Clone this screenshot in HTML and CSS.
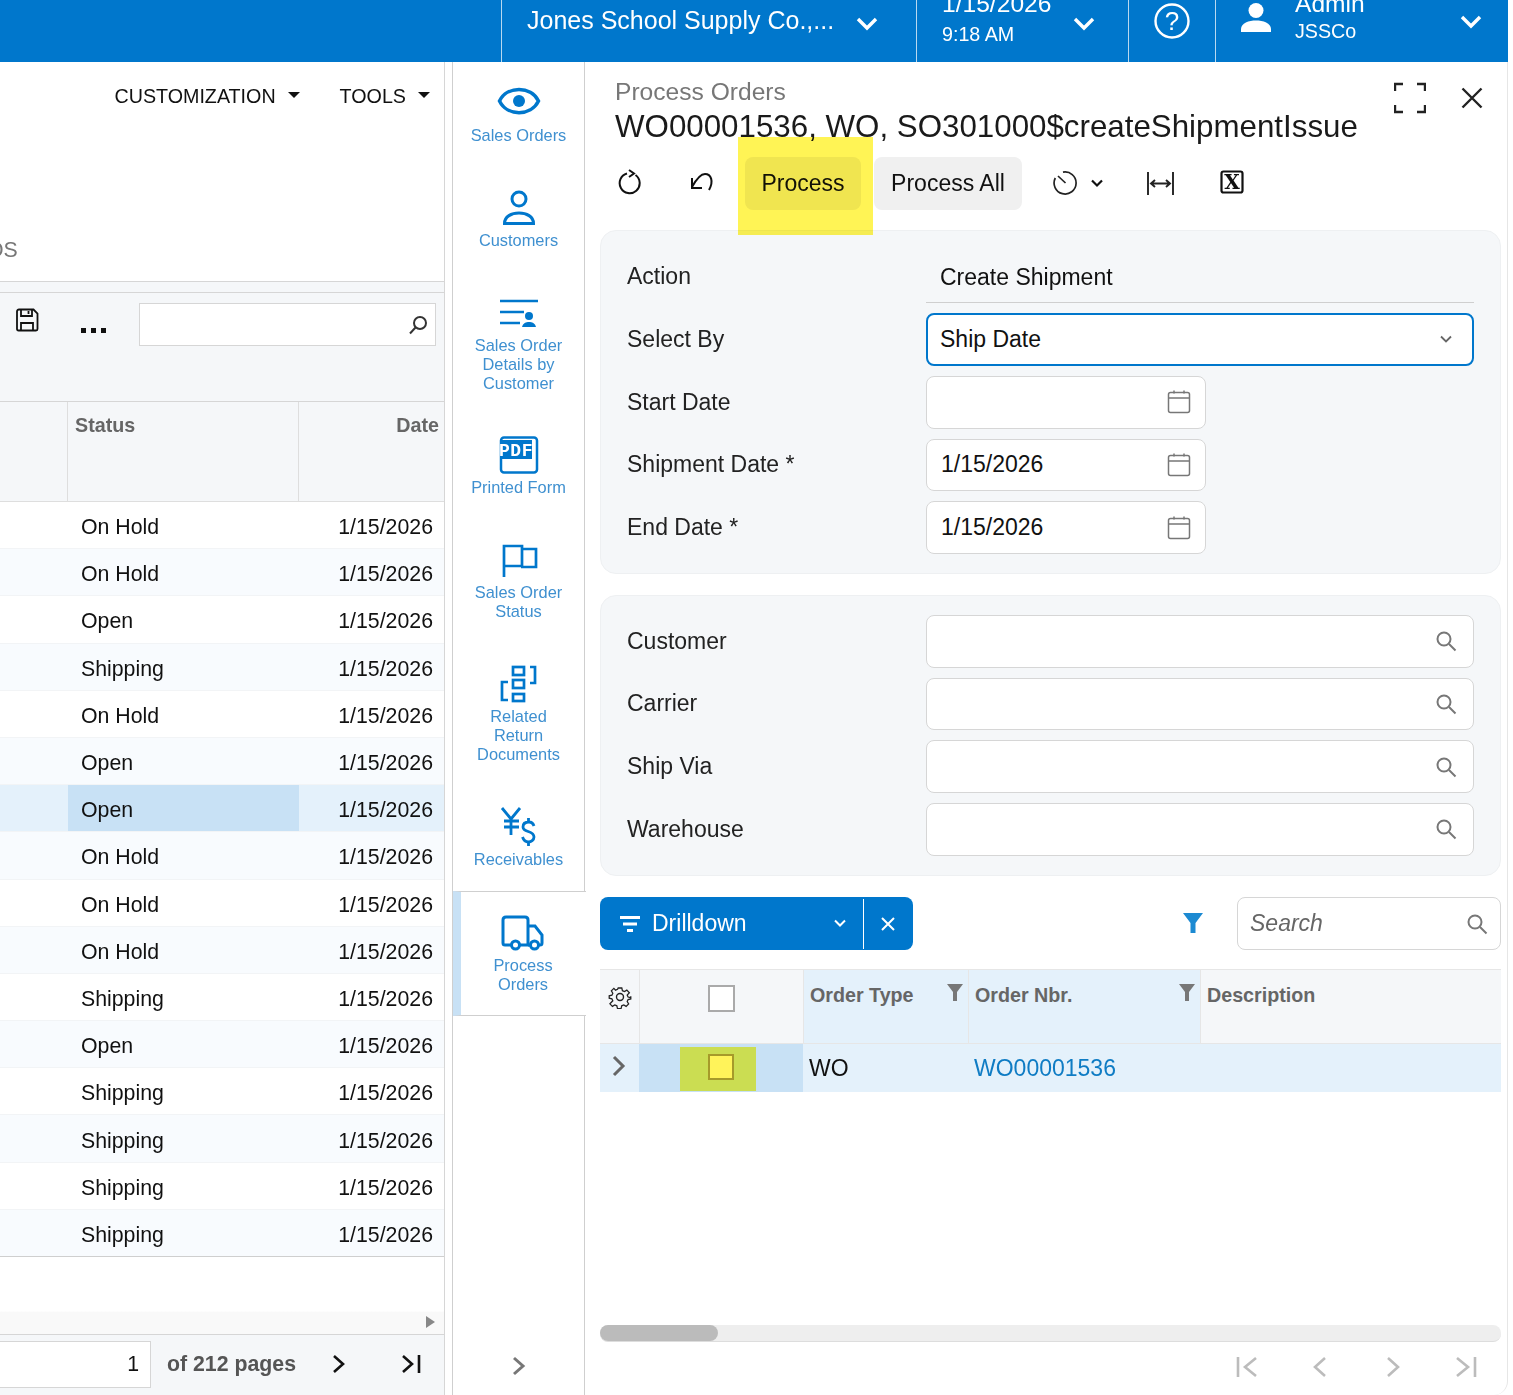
FILE: index.html
```html
<!DOCTYPE html>
<html lang="en">
<head>
<meta charset="utf-8">
<title>Process Orders</title>
<link rel="stylesheet" href="styles.css">
</head>
<body>
<header class="topbar">
  <div class="top-cell company"><span class="company-name">Jones School Supply Co.,...</span>
    <svg class="chev" width="22" height="14" viewBox="0 0 22 14"><path d="M2 2l9 9 9-9" /></svg></div>
  <div class="top-cell when"><div class="two-line"><div class="big">1/15/2026</div><div class="small">9:18 AM</div></div>
    <svg class="chev" width="22" height="14" viewBox="0 0 22 14"><path d="M2 2l9 9 9-9" /></svg></div>
  <div class="top-cell help"><svg width="36" height="36" viewBox="0 0 36 36"><circle cx="18" cy="18" r="16.500" fill="none" stroke="#fff" stroke-width="2.400"/><text x="18" y="27" text-anchor="middle" class="qmark">?</text></svg></div>
  <div class="top-cell user"><svg class="user-ico" width="30" height="30" viewBox="0 0 30 30"><ellipse cx="15" cy="7.500" rx="7.500" ry="7.500" fill="#fff"/><path d="M0 29v-3c0-6 8-8.500 15-8.500s15 2.500 15 8.500v3z" fill="#fff"/></svg>
    <div class="two-line user-text"><div class="big">Admin</div><div class="small">JSSCo</div></div>
    <svg class="chev" width="22" height="14" viewBox="0 0 22 14"><path d="M2 2l9 9 9-9" /></svg></div>
</header>
<main class="workspace">
  <section class="left">
    <div class="menu">
      <span class="menu-item">CUSTOMIZATION<i class="caret"></i></span>
      <span class="menu-item">TOOLS<i class="caret"></i></span>
    </div>
    <div class="left-title">OS</div>
    <div class="strip"></div>
    <div class="grid-tools">
      <svg class="save" width="24" height="24" viewBox="0 0 24 24" fill="none" stroke="#111" stroke-width="1.800"><path d="M2 3.500C2 2 3 1.500 4 1.500h14.500l4 4V21c0 1-.7 1.500-1.500 1.500H3.500C2.500 22.500 2 22 2 21z"/><path d="M6 1.500v6.500h11V1.500M6 22.500V15h12v7.500"/><path d="M13.500 3v3"/></svg>
      <span class="dots"><i></i><i></i><i></i></span>
      <div class="quick"><svg width="22" height="22" viewBox="0 0 22 22" fill="none" stroke="#333" stroke-width="2"><circle cx="13" cy="9" r="6"/><path d="M8.500 13.500L3 19.500"/></svg></div>
    </div>
    <div class="lg-head"><div class="lg-c0"></div><div class="lg-status">Status</div><div class="lg-date">Date</div></div>
    <div class="lg-rows">
      <div class="lg-row"><span class="s">On Hold</span><span class="d">1/15/2026</span></div>
      <div class="lg-row alt"><span class="s">On Hold</span><span class="d">1/15/2026</span></div>
      <div class="lg-row"><span class="s">Open</span><span class="d">1/15/2026</span></div>
      <div class="lg-row alt"><span class="s">Shipping</span><span class="d">1/15/2026</span></div>
      <div class="lg-row"><span class="s">On Hold</span><span class="d">1/15/2026</span></div>
      <div class="lg-row alt"><span class="s">Open</span><span class="d">1/15/2026</span></div>
      <div class="lg-row sel"><span class="s">Open</span><span class="d">1/15/2026</span></div>
      <div class="lg-row alt"><span class="s">On Hold</span><span class="d">1/15/2026</span></div>
      <div class="lg-row"><span class="s">On Hold</span><span class="d">1/15/2026</span></div>
      <div class="lg-row alt"><span class="s">On Hold</span><span class="d">1/15/2026</span></div>
      <div class="lg-row"><span class="s">Shipping</span><span class="d">1/15/2026</span></div>
      <div class="lg-row alt"><span class="s">Open</span><span class="d">1/15/2026</span></div>
      <div class="lg-row"><span class="s">Shipping</span><span class="d">1/15/2026</span></div>
      <div class="lg-row alt"><span class="s">Shipping</span><span class="d">1/15/2026</span></div>
      <div class="lg-row"><span class="s">Shipping</span><span class="d">1/15/2026</span></div>
      <div class="lg-row alt"><span class="s">Shipping</span><span class="d">1/15/2026</span></div>
    </div>
    <div class="lg-empty"><i class="tiny-arrow"></i></div>
    <div class="lg-pager">
      <div class="page-input">1</div>
      <span class="pages">of 212 pages</span>
      <svg class="pg-next" width="16" height="20" viewBox="0 0 16 20" fill="none" stroke="#111" stroke-width="2.600"><path d="M3 2l9 8-9 8"/></svg>
      <svg class="pg-last" width="22" height="20" viewBox="0 0 22 20" fill="none" stroke="#111" stroke-width="2.600"><path d="M2 2l9 8-9 8M18 1v18"/></svg>
    </div>
  </section>

  <nav class="side">
    <a class="side-item"><svg class="ic" width="44" height="40" viewBox="0 0 44 40" fill="none" stroke="#0077cc"><path d="M2.500 20C10 4.500 34 4.500 41.500 20 34 35.500 10 35.500 2.500 20z" stroke-width="3.500"/><circle cx="22" cy="20" r="6" fill="#0077cc" stroke="none"/></svg><span>Sales Orders</span></a>
    <a class="side-item"><svg class="ic" width="44" height="40" viewBox="0 0 44 40" fill="none" stroke="#0077cc" stroke-width="3"><circle cx="22" cy="11" r="7"/><path d="M7.500 35.500c0-7 7-10.500 14.500-10.500s14.500 3.500 14.500 10.500z"/></svg><span>Customers</span></a>
    <a class="side-item"><svg class="ic" width="44" height="40" viewBox="0 0 44 40" fill="none" stroke="#0077cc" stroke-width="2.600"><path d="M3 8h38M3 19h24M3 30h20"/><circle cx="32" cy="23" r="4" fill="#0077cc" stroke="none"/><path d="M25 34c1-4 4-5 7-5s6 1 7 5z" fill="#0077cc" stroke="none"/></svg><span>Sales Order<br>Details by<br>Customer</span></a>
    <a class="side-item pdf-item"><svg class="ic" width="44" height="40" viewBox="0 0 44 40" fill="none"><rect x="4" y="2.500" width="36" height="35" rx="3" stroke="#0077cc" stroke-width="2.500"/><rect x="3" y="5" width="32" height="19" fill="#0077cc"/><text x="19" y="21" text-anchor="middle" class="pdf">PDF</text></svg><span>Printed Form</span></a>
    <a class="side-item"><svg class="ic" width="44" height="40" viewBox="0 0 44 40" fill="none" stroke="#0077cc" stroke-width="2.700"><path d="M7 37V6h18v20H7"/><path d="M25 9h14v18H24"/></svg><span>Sales Order<br>Status</span></a>
    <a class="side-item"><svg class="ic" width="44" height="40" viewBox="0 0 44 40" fill="none" stroke="#0077cc" stroke-width="2.700"><rect x="16" y="3" width="11" height="8"/><rect x="16" y="16" width="11" height="8"/><rect x="16" y="30" width="11" height="7"/><path d="M33 3h5v16h-5M11 18H5v18h6"/></svg><span>Related<br>Return<br>Documents</span></a>
    <a class="side-item"><svg class="ic" width="44" height="40" viewBox="0 0 44 40" fill="none" stroke="#0077cc" stroke-width="2.800"><path d="M5 1l9 11 9-11M14 12v16M7 14h15M7 20h15"/><path d="M37 19c-1-3-3-4-5-4-3 0-6 1-6 5 0 6 11 3 11 10 0 3-3 5-5.500 5-3 0-5-2-6-5M31.500 11v4M31.500 35v4"/></svg><span>Receivables</span></a>
    <a class="side-item active"><svg class="ic" width="44" height="40" viewBox="0 0 44 40" fill="none" stroke="#0077cc" stroke-width="3"><path d="M12 32H5c-1.500 0-2-1-2-2V7c0-2 1-3 3-3h19c2 0 3 1 3 3v25H19"/><path d="M28 13h7l7 9v8c0 1-.5 2-2 2h-2M31 32h-3"/><circle cx="15.500" cy="32" r="4"/><circle cx="34.500" cy="32" r="4"/></svg><span>Process<br>Orders</span></a>
    <div class="side-fill"><svg class="side-chev" width="16" height="22" viewBox="0 0 16 22" fill="none" stroke="#777" stroke-width="3"><path d="M3 3l9 8-9 8"/></svg></div>
  </nav>

  <section class="panel">
    <div class="hl-process"></div>
    <div class="panel-head">
      <div class="titles">
        <div class="t-small">Process Orders</div>
        <div class="t-big">WO00001536, WO, SO301000$createShipmentIssue</div>
      </div>
      <svg class="full" width="32" height="32" viewBox="0 0 32 32" fill="none" stroke="#222" stroke-width="2.400"><path d="M1 9V2h8M23 2h8v7M31 23v7h-8M9 30H1v-7"/></svg>
      <svg class="close" width="22" height="22" viewBox="0 0 22 22" fill="none" stroke="#222" stroke-width="2.400"><path d="M1.500 1.500l19 19M20.500 1.500l-19 19"/></svg>
    </div>
    <div class="tools">
      <svg class="t-refresh" width="24" height="26" viewBox="0 0 24 26" fill="none" stroke="#111" stroke-width="2"><path d="M9 4.500a10 10 0 1 0 8.500 1.500"/><path d="M11 1l5 3.500-5 3.500"/></svg>
      <svg class="t-undo" width="26" height="20" viewBox="0 0 26 20" fill="none" stroke="#111" stroke-width="2"><path d="M3 15C8 6 12 2 16 2c6 0 9 7 4 16"/><path d="M3 6v10h10"/></svg>
      <button class="btn btn-process">Process</button>
      <button class="btn btn-all">Process All</button>
      <svg class="t-clock" width="26" height="26" viewBox="0 0 26 26" fill="none" stroke="#222" stroke-width="1.700"><path d="M11 2.200A11 11 0 1 1 3.300 8"/><path d="M6 6l7.500 7"/></svg>
      <svg class="t-down" width="14" height="9" viewBox="0 0 14 9" fill="none" stroke="#111" stroke-width="2.200"><path d="M2 1.500l5 5 5-5"/></svg>
      <svg class="t-fit" width="28" height="26" viewBox="0 0 28 26" fill="none" stroke="#222" stroke-width="1.900"><path d="M2 2v23M27 2v23M5 13.500h19M9 10l-4 3.500 4 3.500M20 10l4 3.500-4 3.500"/></svg>
      <svg class="t-xl" width="24" height="26" viewBox="0 0 24 26"><rect x="1.500" y="2.500" width="21" height="21" rx="2" fill="none" stroke="#111" stroke-width="2.200"/><text x="12" y="20" text-anchor="middle" class="xl">X</text></svg>
    </div>

    <div class="form-card">
      <div class="label">Action</div><div class="value-line">Create Shipment</div>
      <div class="label">Select By</div>
      <div class="field focus">Ship Date<svg class="fi" width="14" height="9" viewBox="0 0 14 9" fill="none" stroke="#666" stroke-width="1.800"><path d="M2 1.500l5 5 5-5"/></svg></div>
      <div class="label">Start Date</div>
      <div class="field short"><svg class="fi" width="24" height="24" viewBox="0 0 24 24" fill="none" stroke="#777" stroke-width="1.500"><rect x="1.500" y="2.500" width="21" height="20" rx="2"/><path d="M1.500 8h21M7 .5v3M17 .5v3"/></svg></div>
      <div class="label">Shipment Date *</div>
      <div class="field short">1/15/2026<svg class="fi" width="24" height="24" viewBox="0 0 24 24" fill="none" stroke="#777" stroke-width="1.500"><rect x="1.500" y="2.500" width="21" height="20" rx="2"/><path d="M1.500 8h21M7 .5v3M17 .5v3"/></svg></div>
      <div class="label">End Date *</div>
      <div class="field short">1/15/2026<svg class="fi" width="24" height="24" viewBox="0 0 24 24" fill="none" stroke="#777" stroke-width="1.500"><rect x="1.500" y="2.500" width="21" height="20" rx="2"/><path d="M1.500 8h21M7 .5v3M17 .5v3"/></svg></div>
    </div>

    <div class="form-card second">
      <div class="label">Customer</div>
      <div class="field"><svg class="fi mag" width="22" height="22" viewBox="0 0 22 22" fill="none" stroke="#777" stroke-width="2"><circle cx="9" cy="9" r="6.500"/><path d="M14 14l6.500 6.500"/></svg></div>
      <div class="label">Carrier</div>
      <div class="field"><svg class="fi mag" width="22" height="22" viewBox="0 0 22 22" fill="none" stroke="#777" stroke-width="2"><circle cx="9" cy="9" r="6.500"/><path d="M14 14l6.500 6.500"/></svg></div>
      <div class="label">Ship Via</div>
      <div class="field"><svg class="fi mag" width="22" height="22" viewBox="0 0 22 22" fill="none" stroke="#777" stroke-width="2"><circle cx="9" cy="9" r="6.500"/><path d="M14 14l6.500 6.500"/></svg></div>
      <div class="label">Warehouse</div>
      <div class="field"><svg class="fi mag" width="22" height="22" viewBox="0 0 22 22" fill="none" stroke="#777" stroke-width="2"><circle cx="9" cy="9" r="6.500"/><path d="M14 14l6.500 6.500"/></svg></div>
    </div>

    <div class="filter-bar">
      <div class="drill">
        <svg class="dr-ico" width="20" height="16" viewBox="0 0 20 16" fill="#fff"><rect x="0" y="0" width="20" height="3"/><rect x="3" y="6.500" width="14" height="3"/><rect x="7" y="13" width="6" height="3"/></svg>
        <span class="dr-text">Drilldown</span>
        <svg class="dr-chev" width="14" height="9" viewBox="0 0 14 9" fill="none" stroke="#fff" stroke-width="2"><path d="M2 1.500l5 5 5-5"/></svg>
        <span class="dr-x"><svg width="14" height="14" viewBox="0 0 14 14" fill="none" stroke="#fff" stroke-width="2"><path d="M1 1l12 12M13 1L1 13"/></svg></span>
      </div>
      <svg class="funnel" width="20" height="20" viewBox="0 0 20 20" fill="#1c8ad2"><path d="M0 0h20L12.500 10v10h-5V10z"/></svg>
      <div class="search"><span>Search</span><svg width="22" height="22" viewBox="0 0 22 22" fill="none" stroke="#777" stroke-width="2"><circle cx="9" cy="9" r="6.500"/><path d="M14 14l6.500 6.500"/></svg></div>
    </div>

    <div class="dg">
      <div class="dg-h c-gear"><svg width="24" height="24" viewBox="0 0 24 24" fill="none" stroke="#222" stroke-width="1.400"><circle cx="12" cy="12" r="3.500"/><path d="M10 2h4l.7 3 2.300 1 2.600-1.600 2.800 2.800L20 9.800l1 2.200 3 .7v-1.400 2.800l-3 .7-1 2.200 1.600 2.600-2.800 2.800-2.600-1.600-2.300 1-.7 3h-4l-.7-3-2.300-1-2.600 1.600-2.800-2.800L4 16.200l-1-2.200-3-.7v-2.600l3-.7 1-2.200-1.600-2.600 2.800-2.800L7 4.400l2.300-1z" transform="translate(1.200 1.200) scale(.9)"/></svg></div>
      <div class="dg-h c-check"><i class="box"></i></div>
      <div class="dg-h c-blue">Order Type<svg class="hf" width="16" height="17" viewBox="0 0 16 17" fill="#777"><path d="M0 0h16L10 8v9H6V8z"/></svg></div>
      <div class="dg-h c-blue">Order Nbr.<svg class="hf" width="16" height="17" viewBox="0 0 16 17" fill="#777"><path d="M0 0h16L10 8v9H6V8z"/></svg></div>
      <div class="dg-h">Description</div>
      <div class="dg-c c-arrow"><svg width="16" height="22" viewBox="0 0 16 22" fill="none" stroke="#666" stroke-width="3"><path d="M3 2l9 9-9 9"/></svg></div>
      <div class="dg-c c-sel"><span class="yel"><i class="box y"></i></span></div>
      <div class="dg-c">WO</div>
      <div class="dg-c link">WO00001536</div>
      <div class="dg-c"></div>
    </div>

    <div class="grow"></div>
    <div class="hscroll"><div class="thumb"></div></div>
    <div class="pager">
      <svg width="22" height="22" viewBox="0 0 22 22"><path d="M2 1v20M20 2L9 11l11 9"/></svg>
      <svg width="22" height="22" viewBox="0 0 22 22"><path d="M16 2L6 11l10 9"/></svg>
      <svg width="22" height="22" viewBox="0 0 22 22"><path d="M6 2l10 9-10 9"/></svg>
      <svg width="22" height="22" viewBox="0 0 22 22"><path d="M2 2l11 9-11 9M20 1v20"/></svg>
    </div>
  </section>
</main>
</body>
</html>
```

FILE: styles.css
```css
* { box-sizing: border-box; }
html, body { margin: 0; padding: 0; }
body {
  width: 1513px;
  height: 1395px;
  overflow: hidden;
  background: #fff;
  font-family: "Liberation Sans", Arial, sans-serif;
  color: #111;
}

/* top bar */
.topbar {
  height: 62px;
  width: 1508px;
  background: #0077cc;
  color: #fff;
  display: flex;
  padding-left: 501px;
  overflow: hidden;
}
.top-cell {
  display: flex;
  align-items: center;
  border-left: 1px solid #b9d9f0;
  height: 62px;
  position: relative;
}
.company { width: 415px; padding-left: 25px; font-size: 25px; padding-bottom: 20px; }
.company-name { width: 329px; margin-top: -2px; }
.company .chev { margin-top: 5px; }
.when { width: 212px; padding-left: 25px; }
.when .chev { margin-top: -14px; }
.help { width: 87px; justify-content: center; padding-bottom: 20px; }
.user { width: 293px; padding-left: 25px; }
.user .chev { margin-top: -18px; }
.two-line { width: 131px; margin-top: -26px; }
.big { font-size: 24.600px; line-height: 28px; }
.small { font-size: 19.700px; line-height: 23px; margin-top: 5px; }
.user-text .small { margin-top: 2px; margin-bottom: 3px; }
.chev { fill: none; stroke: #fff; stroke-width: 3.400; flex: none; }
.qmark { fill: #fff; font-size: 26px; font-family: "Liberation Sans", sans-serif; }
.user-ico { margin-top: -26px; flex: none; }
.user-text { margin-left: 24px; width: 165px; }

/* main */
.workspace { display: flex; height: 1333px; width: 1508px; }

/* left */
.left {
  width: 445px;
  margin-right: 7px;
  display: flex;
  flex-direction: column;
  border-right: 1px solid #d6d6d6;
  flex: none;
}
.menu {
  height: 62px;
  display: flex;
  justify-content: flex-end;
  align-items: center;
  gap: 40px;
  padding-right: 14px;
  font-size: 19.700px;
  padding-top: 6px;
  flex: none;
}
.menu-item { display: flex; align-items: center; }
.caret {
  display: block;
  width: 0;
  height: 0;
  margin-left: 12px;
  margin-top: -2px;
  border-left: 6px solid transparent;
  border-right: 6px solid transparent;
  border-top: 6px solid #111;
}
.left-title {
  height: 158px;
  padding-top: 112px;
  margin-left: -13px;
  font-size: 21.300px;
  line-height: 28px;
  color: #777;
  border-bottom: 1px solid #d6d6d6;
  flex: none;
}
.strip { height: 11px; background: #f5f7f9; border-bottom: 1px solid #d6d6d6; flex: none; }
.grid-tools {
  height: 109px;
  background: #f5f7f9;
  display: flex;
  align-items: flex-start;
  border-bottom: 1px solid #d6d6d6;
  padding-top: 10px;
  flex: none;
}
.save { margin: 5px 0 0 15px; flex: none; }
.dots { display: flex; gap: 5px; margin: 25px 0 0 42px; flex: none; }
.dots i { width: 5px; height: 5px; background: #111; display: block; }
.quick {
  width: 297px;
  height: 43px;
  margin-left: 33px;
  background: #fff;
  border: 1px solid #d6d6d6;
  display: flex;
  justify-content: flex-end;
  align-items: center;
  padding-right: 6px;
  flex: none;
}
.lg-head {
  height: 100px;
  background: #f5f7f9;
  display: grid;
  grid-template-columns: 67px 231px 1fr;
  border-bottom: 1px solid #dedede;
  font-weight: 700;
  font-size: 19.700px;
  color: #666;
  flex: none;
}
.lg-status, .lg-date { padding-top: 11px; border-left: 1px solid #dedede; line-height: 24px; }
.lg-status { padding-left: 7px; }
.lg-date { text-align: right; padding-right: 5px; }
.lg-rows {
  height: 755px;
  display: grid;
  grid-auto-rows: 47.200px;
  flex: none;
  border-bottom: 1px solid #cfcfcf;
  overflow: hidden;
}
.lg-row {
  display: grid;
  grid-template-columns: 68px 231px 1fr;
  align-items: center;
  font-size: 21.300px;
  border-bottom: 1px solid #f2f4f6;
}
.lg-row.alt { background: #f8fbfe; }
.lg-row.sel { background: #e4f1fb; }
.s { grid-column: 2; padding: 5px 0 0 13px; align-self: stretch; display: flex; align-items: center; }
.sel .s { background: #c8e1f5; }
.d { text-align: right; padding: 5px 11px 0 0; }
.lg-empty {
  height: 78px;
  background: linear-gradient(#fff 70%, #f9f9f9 72%);
  border-bottom: 1px solid #d6d6d6;
  position: relative;
  flex: none;
}
.tiny-arrow {
  position: absolute;
  right: 9px;
  bottom: 6px;
  width: 0;
  height: 0;
  border-top: 6px solid transparent;
  border-bottom: 6px solid transparent;
  border-left: 9px solid #888;
}
.lg-pager {
  flex: 1;
  background: #f5f7f9;
  display: flex;
  align-items: flex-start;
  padding-top: 6px;
}
.page-input {
  width: 151px;
  height: 47px;
  background: #fff;
  border: 1px solid #d6d6d6;
  border-left: 0;
  text-align: right;
  padding-right: 11px;
  font-size: 21.300px;
  line-height: 45px;
  flex: none;
}
.pages { margin-left: 16px; font-weight: 700; font-size: 21.300px; line-height: 46px; color: #555; width: 129px; flex: none; white-space: nowrap; }
.pg-next { margin: 13px 0 0 35px; flex: none; }
.pg-last { margin: 13px 0 0 54px; flex: none; }

/* side nav */
.side {
  width: 133px;
  display: flex;
  flex-direction: column;
  border-left: 1px solid #cfcfcf;
  flex: none;
}
.side-item {
  display: flex;
  flex-direction: column;
  align-items: center;
  padding: 21.500px 0;
  border-right: 1px solid #cfcfcf;
  font-size: 16.400px;
  line-height: 19px;
  color: #3f90d0;
  text-align: center;
  flex: none;
}
.side-item:first-child { padding-top: 19px; }
.side-item:first-child .ic { margin-bottom: 5px; }
.side-item.pdf-item { padding-top: 20.500px; }
.ic { display: block; margin-bottom: 3px; flex: none; }
.pdf { fill: #fff; font-family: "Liberation Mono", monospace; font-weight: 700; font-size: 18px; letter-spacing: .5px; }
.side-item.active {
  border-right: 0;
  border-top: 1px solid #cfcfcf;
  border-bottom: 1px solid #cfcfcf;
  border-left: 8px solid #c8e1f5;
  padding: 21px 1px 21px 0;
  margin-right: -1px;
}
.side-item.active .ic { margin-left: -3px; }
.side-fill {
  flex: 1;
  border-right: 1px solid #cfcfcf;
  display: flex;
  justify-content: center;
  align-items: flex-end;
  padding-bottom: 18px;
}

/* panel */
.panel {
  flex: 1;
  min-width: 0;
  display: flex;
  flex-direction: column;
  padding: 0 6px 0 15px;
  position: relative;
  border-right: 1px solid #e6e6e6;
  border-bottom-right-radius: 14px;
}
.hl-process {
  position: absolute;
  left: 153px;
  top: 75px;
  width: 135px;
  height: 98px;
  background: rgba(255, 240, 20, .72);
  mix-blend-mode: multiply;
}
.panel-head { display: flex; padding: 16px 0 0 15px; height: 95px; flex: none; }
.titles { flex: 1; min-width: 0; }
.t-small { font-size: 24.600px; line-height: 28px; color: #777; }
.t-big { font-size: 31.300px; line-height: 38px; margin-top: 2px; color: #1a1a1a; white-space: nowrap; }
.full { margin: 4px 35px 0 0; flex: none; }
.close { margin: 9px 18px 0 0; flex: none; }
.tools { display: flex; align-items: center; height: 53px; flex: none; margin-bottom: 20px; }
.btn {
  height: 53px;
  border: 0;
  border-radius: 8px;
  font: 23px "Liberation Sans", Arial, sans-serif;
  color: #111;
  background: #f0f0f0;
  padding: 0;
  flex: none;
}
.t-refresh { margin: -3px 0 0 18px; flex: none; }
.t-undo { margin: -3px 0 0 47px; flex: none; }
.btn-process { width: 116px; margin-left: 30px; }
.btn-all { width: 148px; margin-left: 13px; }
.t-clock { margin: -2px 0 0 30px; flex: none; }
.t-down { margin-left: 12px; flex: none; }
.t-fit { margin: -2px 0 0 42px; flex: none; }
.t-xl { margin: -3px 0 0 46px; flex: none; }

.form-card {
  background: #f5f7f9;
  border: 1px solid #eef0f2;
  border-radius: 16px;
  display: grid;
  grid-template-columns: 299px 1fr;
  grid-auto-rows: 52.700px;
  row-gap: 10px;
  padding: 19.500px 26px 19.500px 26px;
  margin-bottom: 21px;
  font-size: 23px;
  align-items: stretch;
  flex: none;
}
.form-card.second { margin-bottom: 21px; padding: 18.500px 26px 19.700px 26px; }
.label { display: flex; align-items: center; color: #222; }
.value-line { border-bottom: 1px solid #cfcfcf; padding: 2px 0 0 14px; display: flex; align-items: center; height: 52px; }
.field {
  background: #fff;
  border: 1px solid #d6d6d6;
  border-radius: 8px;
  display: flex;
  align-items: center;
  padding: 0 14px;
  position: relative;
}
.field.short { width: 280px; }
.field.focus { border: 2px solid #0077cc; padding-left: 12px; }
.fi { margin-left: auto; flex: none; }
.mag { margin-right: 2px; }
.focus .fi { margin-right: 5px; }

.filter-bar { display: flex; align-items: center; height: 53px; flex: none; margin-bottom: 19px; }
.drill {
  width: 313px;
  height: 53px;
  background: #0077cc;
  border-radius: 8px;
  color: #fff;
  display: flex;
  align-items: center;
  font-size: 23px;
  flex: none;
}
.dr-ico { margin-left: 20px; flex: none; }
.dr-text { margin-left: 12px; width: 181px; }
.dr-chev { flex: none; }
.dr-x {
  margin-left: 16px;
  border-left: 1px solid #fff;
  height: 50px;
  width: 48px;
  display: flex;
  align-items: center;
  justify-content: center;
}
.funnel { margin: -2px 0 0 270px; flex: none; }
.search {
  width: 264px;
  height: 53px;
  margin-left: 34px;
  border: 1px solid #d6d6d6;
  border-radius: 8px;
  display: flex;
  align-items: center;
  justify-content: space-between;
  padding: 0 12px;
  font-size: 23px;
  font-style: italic;
  color: #666;
  flex: none;
}
.dg {
  display: grid;
  grid-template-columns: 39px 164px 165px 232px 1fr;
  grid-template-rows: 75px 48px;
  flex: none;
}
.dg-h {
  background: #f5f7f9;
  border-top: 1px solid #e6e6e6;
  border-left: 1px solid #e6e6e6;
  border-bottom: 1px solid #e6e6e6;
  font-weight: 700;
  font-size: 19.700px;
  color: #666;
  padding: 14px 0 0 6px;
  position: relative;
}
.c-blue { background: #e4f1fb; }
.c-gear { border-left: 0; padding: 15px 0 0 8px; }
.c-check { display: flex; justify-content: center; padding: 15px 1px 0 0; }
.hf { position: absolute; right: 5px; top: 14px; }
.box { display: block; width: 27px; height: 27px; background: #fff; border: 2px solid #aaa; }
.box.y { width: 26px; height: 26px; background: #fff35a; border-color: #a69a2a; margin: -4px 0 0 5px; }
.dg-c {
  background: #e4f1fb;
  font-size: 23px;
  display: flex;
  align-items: center;
  padding-left: 6px;
  color: #111;
}
.c-arrow { padding-left: 11px; padding-bottom: 4px; }
.c-sel { background: #c8e1f5; padding: 3px 0 1px 41px; align-items: stretch; }
.yel { width: 76px; background: #cbdd52; display: flex; align-items: center; justify-content: center; }
.link { color: #0f7cc4; }
.grow { flex: 1; }
.hscroll { height: 17px; background: #eee; border-radius: 8px; border-bottom: 1px solid #ddd; flex: none; }
.thumb { width: 118px; height: 16px; background: #bbb; border-radius: 8px; }
.pager {
  height: 53px;
  display: flex;
  justify-content: flex-end;
  align-items: center;
  padding: 0 24px 4px 0;
  gap: 51px;
  flex: none;
}
.pager svg { fill: none; stroke: #bcbcbc; stroke-width: 2.600; flex: none; }
.xl { font: 700 20px "DejaVu Serif", serif; fill: #111; }
```
